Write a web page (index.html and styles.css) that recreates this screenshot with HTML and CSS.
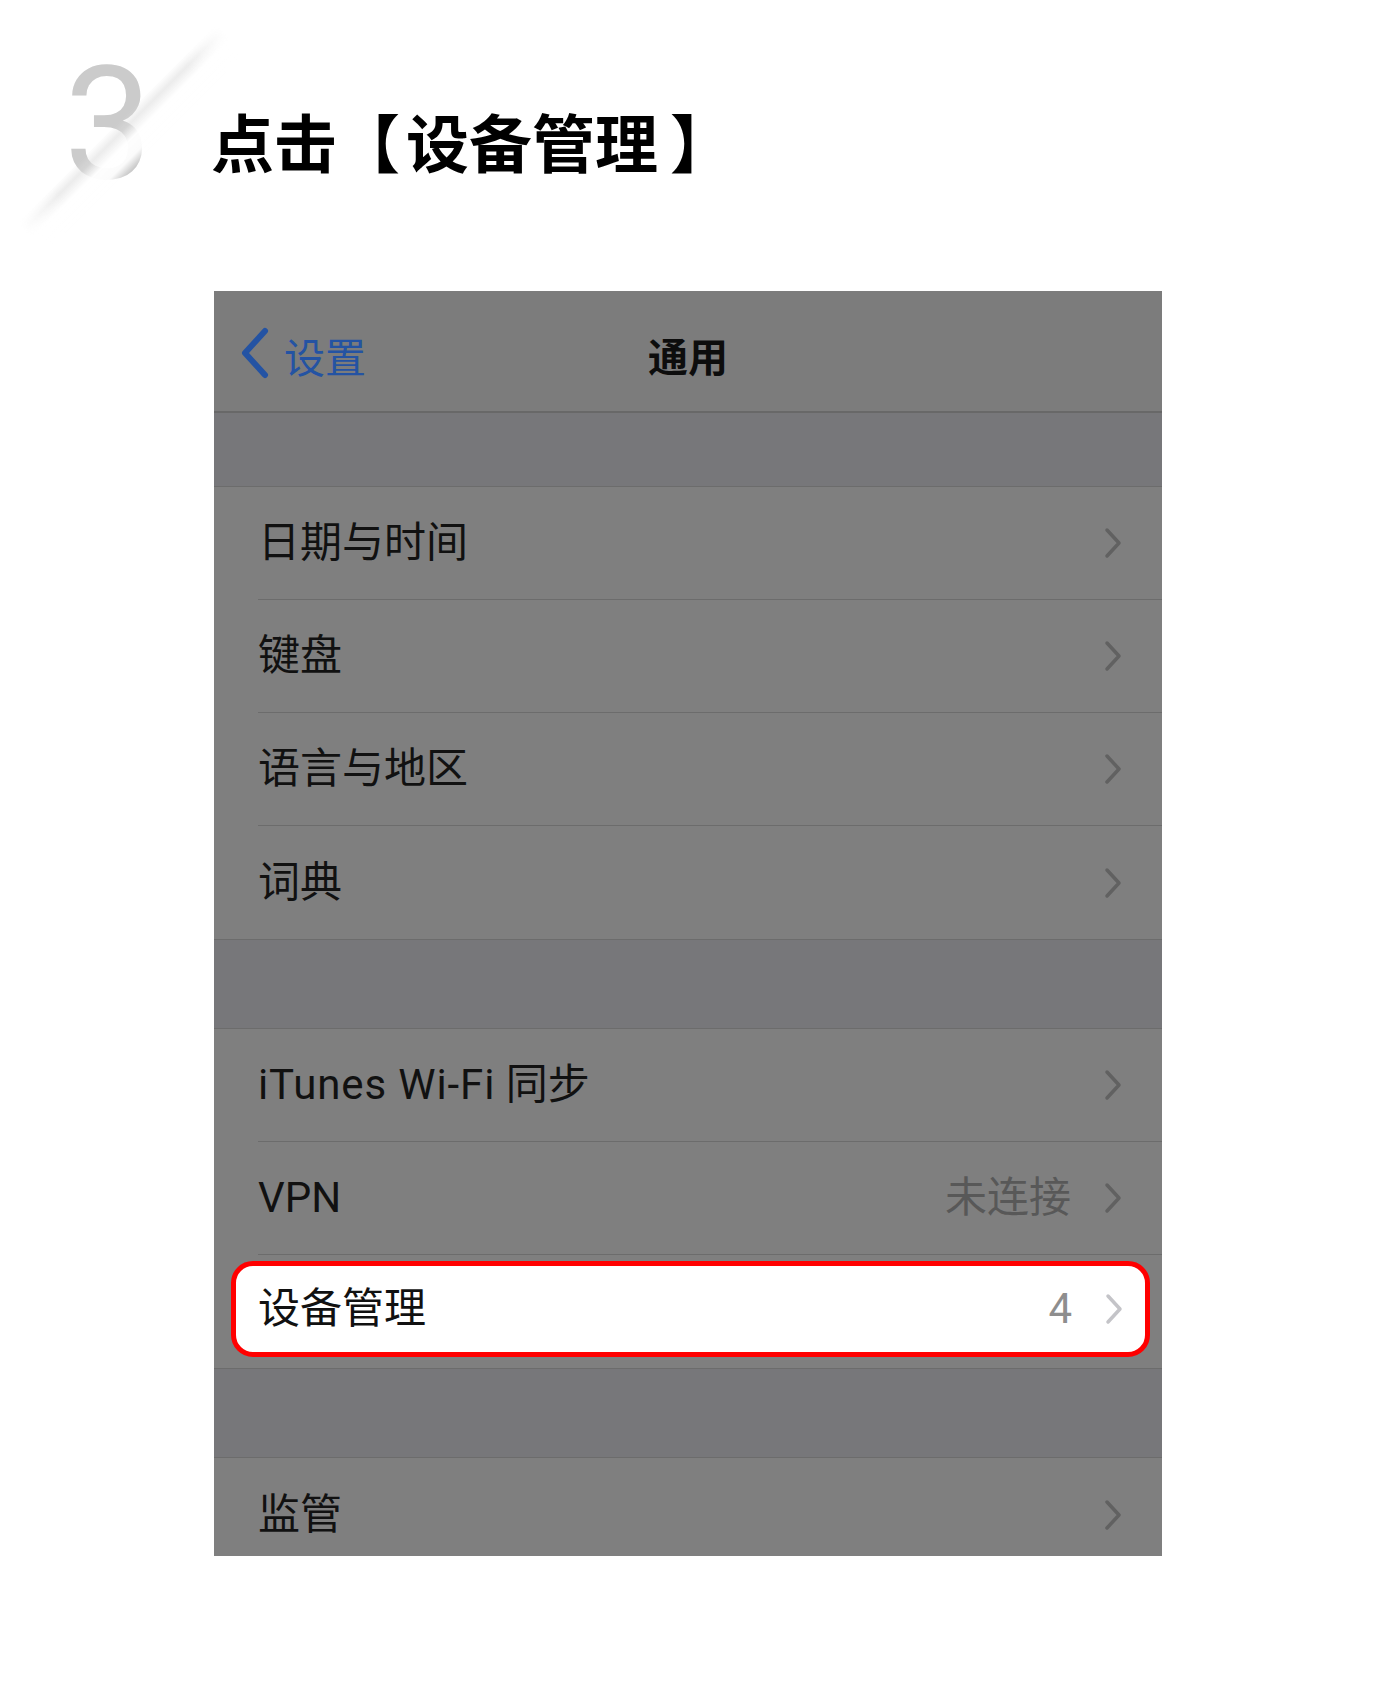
FILE: index.html
```html
<!DOCTYPE html>
<html lang="zh-CN">
<head>
<meta charset="utf-8">
<title>点击【设备管理】</title>
<link rel="stylesheet" href="styles.css">
</head>
<body>
<div class="page">
  <header class="step">
    <div class="step-num"><span class="num">3</span><span class="slash"></span></div>
    <h1 class="step-title">点击<span class="br br-open">【</span>设备管理<span class="br br-close">】</span></h1>
  </header>

  <div class="phone">
    <div class="navbar">
      <div class="back">
        <svg class="back-icon" width="30" height="52" viewBox="0 0 30 52"><path d="M25 4 L5 26 L25 48" fill="none" stroke="#2453a3" stroke-width="6" stroke-linecap="round" stroke-linejoin="round"/></svg>
        <span>设置</span>
      </div>
      <div class="nav-title">通用</div>
      <div></div>
    </div>

    <div class="body">
      <div class="gap gap-top"></div>

      <div class="group">
        <div class="row"><div class="row-inner"><span class="label">日期与时间</span><svg class="chev" width="18" height="32" viewBox="0 0 18 32"><path d="M3 3 L15 16 L3 29" fill="none" stroke-width="3.5" stroke-linecap="round" stroke-linejoin="round"/></svg></div></div>
        <div class="row"><div class="row-inner"><span class="label">键盘</span><svg class="chev" width="18" height="32" viewBox="0 0 18 32"><path d="M3 3 L15 16 L3 29" fill="none" stroke-width="3.5" stroke-linecap="round" stroke-linejoin="round"/></svg></div></div>
        <div class="row"><div class="row-inner"><span class="label">语言与地区</span><svg class="chev" width="18" height="32" viewBox="0 0 18 32"><path d="M3 3 L15 16 L3 29" fill="none" stroke-width="3.5" stroke-linecap="round" stroke-linejoin="round"/></svg></div></div>
        <div class="row"><div class="row-inner last"><span class="label">词典</span><svg class="chev" width="18" height="32" viewBox="0 0 18 32"><path d="M3 3 L15 16 L3 29" fill="none" stroke-width="3.5" stroke-linecap="round" stroke-linejoin="round"/></svg></div></div>
      </div>

      <div class="gap"></div>

      <div class="group">
        <div class="row"><div class="row-inner"><span class="label"><span class="latin">iTunes Wi-Fi</span> 同步</span><svg class="chev" width="18" height="32" viewBox="0 0 18 32"><path d="M3 3 L15 16 L3 29" fill="none" stroke-width="3.5" stroke-linecap="round" stroke-linejoin="round"/></svg></div></div>
        <div class="row"><div class="row-inner"><span class="label">VPN</span><span class="value">未连接</span><svg class="chev" width="18" height="32" viewBox="0 0 18 32"><path d="M3 3 L15 16 L3 29" fill="none" stroke-width="3.5" stroke-linecap="round" stroke-linejoin="round"/></svg></div></div>
        <div class="row selected"><div class="highlight"><span class="label">设备管理</span><span class="value value-light">4</span><svg class="chev chev-light" width="18" height="32" viewBox="0 0 18 32"><path d="M3 3 L15 16 L3 29" fill="none" stroke-width="3.5" stroke-linecap="round" stroke-linejoin="round"/></svg></div></div>
      </div>

      <div class="gap"></div>

      <div class="group group-open">
        <div class="row"><div class="row-inner last"><span class="label">监管</span><svg class="chev" width="18" height="32" viewBox="0 0 18 32"><path d="M3 3 L15 16 L3 29" fill="none" stroke-width="3.5" stroke-linecap="round" stroke-linejoin="round"/></svg></div></div>
      </div>
    </div>
  </div>
</div>
</body>
</html>
```

FILE: styles.css
```css
html, body {
  margin: 0;
  padding: 0;
  background: #ffffff;
}

.page {
  width: 1380px;
  font-family: Roboto, "Noto Sans CJK SC", sans-serif;
  color: #111111;
}

/* ---------- step header ---------- */
.step {
  display: flex;
  align-items: flex-start;
  height: 291px;
}

.step-num {
  position: relative;
  margin-left: 64px;
  margin-top: 46px;
  width: 82px;
  height: 150px;
}

.num {
  display: block;
  font-family: Roboto, "Noto Sans", sans-serif;
  font-size: 157px;
  line-height: 157px;
  color: #cbcbcb;
}

.slash {
  position: absolute;
  left: 46px;
  top: -48px;
  width: 44px;
  height: 282px;
  transform: rotate(45deg);
  background: linear-gradient(90deg,
    rgba(215, 215, 215, 0) 0%,
    rgba(220, 220, 220, 0.55) 22%,
    rgba(255, 255, 255, 0.97) 48%,
    rgba(255, 255, 255, 0.92) 78%,
    rgba(255, 255, 255, 0) 100%);
  -webkit-mask-image: linear-gradient(180deg, transparent 0%, #000 18%, #000 82%, transparent 100%);
  mask-image: linear-gradient(180deg, transparent 0%, #000 18%, #000 82%, transparent 100%);
}

.step-title {
  margin: 108px 0 0 65px;
  font-family: "Noto Sans CJK SC", sans-serif;
  font-size: 63px;
  line-height: 63px;
  font-weight: 700;
  color: #000000;
  letter-spacing: 0;
  white-space: nowrap;
}

.br-open {
  margin-right: 6px;
}

.br-close {
  margin-left: 12px;
}

/* ---------- phone screenshot ---------- */
.phone {
  margin-left: 214px;
  width: 948px;
  height: 1265px;
  overflow: hidden;
  background: #7f7f7f;
}

.navbar {
  height: 122px;
  box-sizing: border-box;
  padding-top: 8px;
  display: grid;
  grid-template-columns: 1fr auto 1fr;
  align-items: center;
  background: #7c7c7c;
  border-bottom: 2px solid #686868;
}

.back {
  display: flex;
  align-items: center;
  gap: 14px;
  padding-left: 26px;
  color: #2453a3;
  font-family: "Noto Sans CJK SC", sans-serif;
  font-size: 41px;
  line-height: 52px;
}

.back-icon {
  margin-top: -4px;
}

.nav-title {
  font-family: "Noto Sans CJK SC", sans-serif;
  font-size: 40px;
  font-weight: 700;
  color: #0d0d0d;
}

.gap {
  height: 88px;
  background: #77777a;
}

.gap-top {
  height: 73px;
}

.group {
  background: #7f7f7f;
  border-top: 1px solid #6c6c6c;
  border-bottom: 1px solid #6c6c6c;
}

.row {
  height: 113px;
}

.row-inner {
  height: 113px;
  box-sizing: border-box;
  margin-left: 44px;
  padding-right: 40px;
  display: flex;
  align-items: center;
  border-bottom: 1px solid #6c6c6c;
}

.row-inner.last {
  border-bottom: none;
}

.label {
  font-size: 42px;
  line-height: 50px;
  color: #111111;
}

.latin {
  letter-spacing: 0.9px;
}

.value {
  margin-left: auto;
  margin-right: 33px;
  font-size: 42px;
  line-height: 50px;
  color: #585858;
}

.value-light {
  color: #8e8e8e;
}

.chev {
  margin-left: auto;
  flex: none;
  stroke: #616161;
}

.value + .chev {
  margin-left: 0;
}

.chev-light {
  stroke: #c4c4c8;
}

.row.selected {
  box-sizing: border-box;
  padding: 6px 12px 11px 17px;
}

.highlight {
  height: 96px;
  box-sizing: border-box;
  display: flex;
  align-items: center;
  padding: 0 22px 0 22px;
  background: #ffffff;
  border: 5px solid #ff0000;
  border-radius: 22px;
}

.group-open {
  border-bottom: none;
}
```
